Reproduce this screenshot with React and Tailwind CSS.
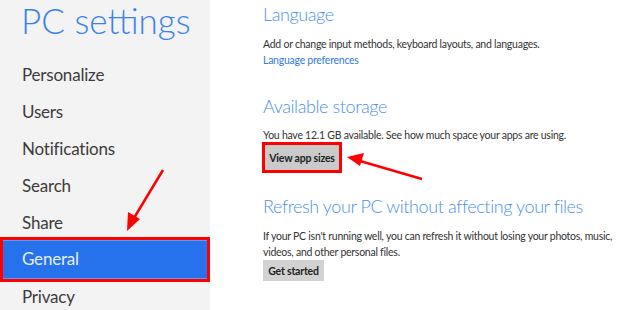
const nav = ["Personalize", "Users", "Notifications", "Search", "Share", "General", "Privacy"];

function Arrows() {
  return (
    <svg className="pointer-events-none absolute left-0 top-0" width="620" height="310" viewBox="0 0 620 310">
      <line x1="163" y1="170" x2="134" y2="218" stroke="#ff0000" strokeWidth="2.5" />
      <polygon points="127,231 128,212 140,219" fill="#ff0000" />
      <line x1="422" y1="179" x2="360" y2="161" stroke="#ff0000" strokeWidth="2.5" />
      <polygon points="347,157 364,153 360,166" fill="#ff0000" />
    </svg>
  );
}

export default function App() {
  return (
    <div className="relative flex h-[310px] w-[620px] overflow-hidden bg-white font-['Lato',sans-serif]">
      <aside className="flex w-[210px] shrink-0 flex-col bg-[#f3f3f3]">
        <h1 className="whitespace-nowrap pl-[21px] text-[35px] font-light leading-[40px] text-[#3a82ee]">
          PC settings
        </h1>
        <ul className="mt-[16px] flex flex-col">
          {nav.map((item) =>
            item === "General" ? (
              <li
                key={item}
                className="-my-[4px] flex h-[45px] items-center border-[3px] border-[#ff0000] bg-[#2672ec]"
              >
                <div className="flex h-full w-full items-center border-y border-[#5f98f2] pb-[2px] pl-[19px] text-[17px] tracking-[-0.2px] text-[#e6efff]">
                  {item}
                </div>
              </li>
            ) : (
              <li
                key={item}
                className="flex h-[37px] items-center pl-[22px] text-[17px] tracking-[-0.2px] text-[#3c3c3c]"
              >
                {item}
              </li>
            )
          )}
        </ul>
      </aside>

      <main className="flex flex-1 flex-col pl-[53px] text-[10.5px] leading-[16px] tracking-[-0.25px] text-[#333333]">
        <h2 className="mt-[2px] text-[18px] font-light leading-[24px] tracking-[-0.4px] text-[#4d8ff0]">Language</h2>
        <p className="mt-[10px]">Add or change input methods, keyboard layouts, and languages.</p>
        <a className="text-[#2f7ae5]">Language preferences</a>

        <h2 className="mt-[26px] text-[18px] font-light leading-[24px] tracking-[-0.4px] text-[#4d8ff0]">
          Available storage
        </h2>
        <p className="mt-[9px]">You have 12.1 GB available. See how much space your apps are using.</p>
        <div className="-mt-[1px] -ml-[1px] flex">
          <button className="h-[31px] w-[80px] whitespace-nowrap border-[3px] border-[#ff0000] bg-[#cacaca] text-[10.5px] font-bold tracking-[-0.2px] text-[#222222]">
            View app sizes
          </button>
        </div>

        <h2 className="mt-[21px] text-[18px] font-light leading-[24px] tracking-[-0.4px] text-[#4d8ff0]">
          Refresh your PC without affecting your files
        </h2>
        <p className="mt-[10px] whitespace-nowrap">
          If your PC isn't running well, you can refresh it without losing your photos, music,
          <br />
          videos, and other personal files.
        </p>
        <div className="flex">
          <button className="h-[21px] w-[61px] whitespace-nowrap bg-[#d2d2d2] text-[10.5px] font-bold tracking-[-0.2px] text-[#222222]">
            Get started
          </button>
        </div>
      </main>

      <Arrows />
    </div>
  );
}
